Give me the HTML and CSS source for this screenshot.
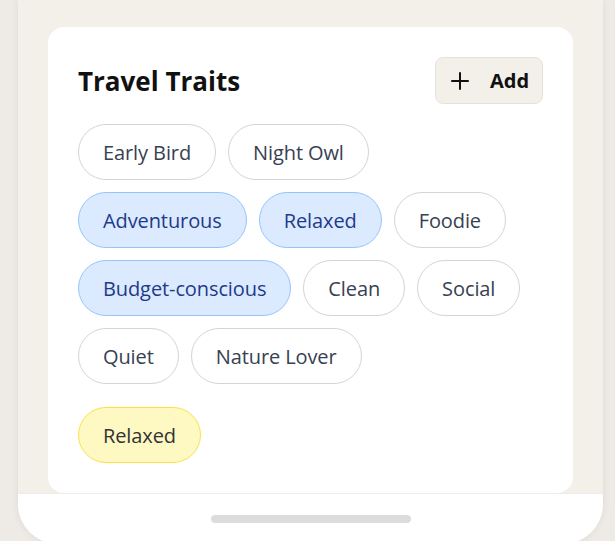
FILE: index.html
```html
<!DOCTYPE html>
<html lang="en">
<head>
<meta charset="utf-8">
<title>Travel Traits</title>
<link rel="stylesheet" href="styles.css">
</head>
<body>
<div class="phone">
  <div class="screen">
    <section class="card">
      <div class="card-head">
        <h2 class="card-title">Travel Traits</h2>
        <button class="add-btn" type="button">
          <svg class="add-icon" width="20" height="20" viewBox="0 0 20 20" fill="none" stroke="currentColor" stroke-width="2" stroke-linecap="round"><path d="M2 10h16M10 2v16"/></svg>
          <span>Add</span>
        </button>
      </div>
      <div class="traits">
        <span class="pill">Early Bird</span>
        <span class="pill">Night Owl</span>
        <span class="pill pill-active">Adventurous</span>
        <span class="pill pill-active">Relaxed</span>
        <span class="pill">Foodie</span>
        <span class="pill pill-active">Budget-conscious</span>
        <span class="pill">Clean</span>
        <span class="pill">Social</span>
        <span class="pill">Quiet</span>
        <span class="pill">Nature Lover</span>
      </div>
      <div class="selected">
        <span class="pill pill-yellow">Relaxed</span>
      </div>
    </section>
  </div>
  <div class="home-bar"><span class="indicator"></span></div>
</div>
</body>
</html>
```
FILE: styles.css
```css
html, body {
  margin: 0;
  padding: 0;
  height: 541px;
  overflow: hidden;
}
body {
  background: #eeebe7;
  font-family: "Open Sans", "Noto Sans", sans-serif;
}
.phone {
  margin-left: 18px;
  width: 585px;
  background: #f3f0ea;
  border-radius: 0 0 40px 40px;
  box-shadow: 0 0 8px rgba(0, 0, 0, 0.07);
  overflow: hidden;
}
.screen {
  height: 493px;
  padding: 27px 30px 0;
  box-sizing: border-box;
  overflow: hidden;
}
.card {
  background: #ffffff;
  border-radius: 16px;
  padding: 30px 30px 30px;
}
.card-head {
  display: flex;
  align-items: center;
  justify-content: space-between;
  margin-bottom: 20px;
}
.card-title {
  margin: 0;
  font-size: 26px;
  font-weight: 700;
  color: #111111;
}
.add-btn {
  display: flex;
  align-items: center;
  gap: 20px;
  height: 47px;
  width: 108px;
  padding: 0 14px;
  box-sizing: border-box;
  background: #f3f0ea;
  border: 1px solid #e6e3de;
  border-radius: 8px;
  font-family: inherit;
  font-size: 20px;
  font-weight: 700;
  color: #111111;
}
.add-icon {
  flex: none;
}
.traits {
  display: flex;
  flex-wrap: wrap;
  gap: 12px;
}
.pill {
  display: inline-flex;
  align-items: center;
  height: 56px;
  box-sizing: border-box;
  padding: 0 24px;
  border: 1px solid #d4d4d8;
  border-radius: 28px;
  background: #ffffff;
  font-size: 20px;
  letter-spacing: -0.1px;
  color: #374151;
}
.pill-active {
  background: #dbeafe;
  border-color: #93c5fd;
  color: #1e3a8a;
}
.selected {
  margin-top: 23px;
  display: flex;
}
.pill-yellow {
  background: #fef9c3;
  border-color: #fde047;
  color: #333333;
}
.home-bar {
  height: 51px;
  border-top: 1px solid #efece7;
  background: #ffffff;
  display: flex;
  justify-content: center;
  padding-top: 21px;
  box-sizing: border-box;
}
.indicator {
  width: 200px;
  height: 8px;
  border-radius: 4px;
  background: #dcdcdc;
}
```
